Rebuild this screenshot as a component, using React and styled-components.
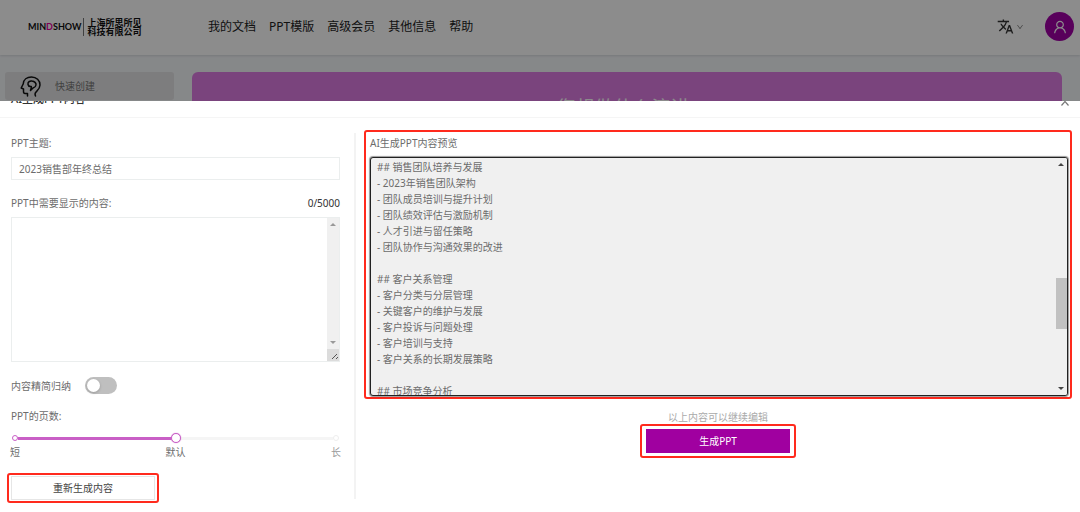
import React, { useState } from "react";
import styled, { createGlobalStyle, css } from "styled-components";
import { MdTranslate } from "react-icons/md";
import { AiOutlineUser, AiOutlineDown } from "react-icons/ai";

const GlobalStyle = createGlobalStyle`
  *, *::before, *::after { box-sizing: border-box; }
  body {
    margin: 0;
    background: #fff;
    color: #6c6c6c;
    font: 10px/16px "Noto Sans", "Noto Sans CJK SC", sans-serif;
  }
  button, input, textarea { font: inherit; color: inherit; margin: 0; }
`;

const Shell = styled.div`
  display: flex;
  flex-direction: column;
  min-height: 100vh;
`;

const Backdrop = styled.div`
  position: relative;
  height: 101px;
  overflow: hidden;
  background: #f5f7fa;
`;

const Mask = styled.div`
  position: absolute;
  inset: 0;
  background: rgba(0, 0, 0, 0.45);
`;

const TopBar = styled.header`
  display: flex;
  align-items: center;
  height: 55px;
  padding: 0 6px 2px 28px;
  background: #fff;
  box-shadow: 0 1px 2px rgba(0, 21, 41, 0.12);
`;

const Brand = styled.a`
  display: flex;
  align-items: center;
  width: 180px;
  color: #111;
  text-decoration: none;
  font: 700 9px/14px Lato, sans-serif;
  em { font-style: normal; color: #e6009e; }
`;

const Company = styled.span`
  margin-left: 2px;
  padding-left: 3px;
  border-left: 1px solid #777;
  font: 700 9px/9px "Noto Sans CJK SC", sans-serif;
`;

const Nav = styled.nav`
  display: flex;
  flex: 1;
  gap: 13px;
  a { color: #222; text-decoration: none; font-size: 12px; }
`;

const IconButton = styled.button`
  display: flex;
  align-items: center;
  gap: 2px;
  padding: 0;
  border: 0;
  background: none;
  color: #333;
`;

const Avatar = styled(IconButton)`
  justify-content: center;
  width: 29px;
  height: 29px;
  margin-left: 21px;
  border-radius: 50%;
  background: #a100a6;
  color: #fff;
`;

const Workspace = styled.div`
  display: flex;
  gap: 18px;
  padding: 17px 18px 0 5px;
`;

const SideItem = styled.a`
  display: flex;
  align-items: center;
  gap: 14px;
  width: 169px;
  height: 28px;
  padding-left: 15px;
  border-radius: 3px;
  background: #e3e4e6;
  color: #777;
  text-decoration: none;
`;

const Banner = styled.div`
  flex: 1;
  height: 80px;
  padding-top: 24px;
  border-radius: 6px;
  background: #de7de3;
  color: #fff;
  font-size: 19px;
  line-height: 24px;
  text-align: center;
`;

const Dialog = styled.section`
  flex: 1;
  background: #fff;
`;

const DialogHeader = styled.header`
  display: flex;
  align-items: flex-end;
  justify-content: space-between;
  height: 17px;
  padding: 0 11px 11px;
  overflow: hidden;
  border-bottom: 1px solid #f5f5f5;
`;

const DialogTitle = styled.h1`
  margin: 0;
  color: #333;
  font-size: 11px;
  line-height: 14px;
  font-weight: 500;
`;

const Columns = styled.div`
  display: grid;
  grid-template-columns: 354px 2px minmax(0, 1fr);
`;

const Divider = styled.div`
  margin: 15px 0 4px;
  background: #f3f3f3;
`;

const Form = styled.form`
  display: flex;
  flex-direction: column;
  align-items: stretch;
  padding: 17px 14px 0 11px;
`;

const Label = styled.label`
  display: block;
`;

const LabelRow = styled.div`
  display: flex;
  justify-content: space-between;
  margin: 15px 0 6px;
  output { color: #333; }
`;

const TextInput = styled.input`
  width: 100%;
  height: 23px;
  margin-top: 6px;
  padding: 0 7px;
  border: 1px solid #ebeeee;
  outline: 0;
`;

const AreaBox = styled.div`
  display: flex;
  overflow: hidden;
  ${(p) => p.$preview
    ? css`
        height: 239px;
        margin-top: 6px;
        border: 1px solid #222;
        border-radius: 3px;
        background: #f0f0f0;
        box-shadow: 0 0 1px 1px rgba(0, 0, 0, 0.4);
      `
    : css`
        height: 145px;
        border: 1px solid #ebeeee;
      `}
  textarea {
    flex: 1;
    min-width: 0;
    padding: ${(p) => (p.$preview ? "1px 6px" : "4px 8px")};
    border: 0;
    outline: 0;
    resize: none;
    overflow: hidden;
    background: transparent;
    line-height: 16px;
  }
`;

const Scrollbar = styled.div`
  display: flex;
  flex-direction: column;
  align-items: center;
  width: 12px;
  padding-top: 5px;
  background: #f0f0f0;
  color: ${(p) => (p.$dark ? "#444" : "#999")};
`;

const Arrow = styled.i`
  border: 3px solid transparent;
  border-top-width: ${(p) => (p.$down ? "3px" : "0")};
  border-bottom-width: ${(p) => (p.$down ? "0" : "3px")};
  ${(p) => (p.$down ? "border-top-color" : "border-bottom-color")}: currentColor;
  margin-bottom: ${(p) => (p.$down ? "5px" : "0")};
`;

const Track = styled.div`
  flex: 1;
  align-self: stretch;
  padding: 112px 0 0 1px;
`;

const Thumb = styled.div`
  height: 51px;
  background: #c1c1c1;
`;

const Grip = styled.svg`
  width: 12px;
  height: 12px;
  background: #dcdcdc;
`;

const SwitchRow = styled.div`
  display: flex;
  align-items: center;
  gap: 14px;
  margin: 15px 0 14px;
`;

const Switch = styled.input`
  appearance: none;
  width: 32px;
  height: 17px;
  border-radius: 9px;
  background: #bfbfbf;
  &::before {
    content: "";
    display: block;
    width: 13px;
    height: 13px;
    margin: 2px;
    border-radius: 50%;
    background: #fff;
    box-shadow: 0 1px 3px rgba(0, 0, 0, 0.2);
  }
  &:checked { background: #a100a6; }
  &:checked::before { margin-left: 17px; }
`;

const Slider = styled.div`
  position: relative;
  display: flex;
  align-items: center;
  height: 12px;
  margin-top: 8px;
`;

const Range = styled.input`
  position: relative;
  z-index: 1;
  appearance: none;
  width: 100%;
  height: 12px;
  background: transparent;
  &::-webkit-slider-runnable-track {
    height: 3px;
    margin: 0;
    background: linear-gradient(90deg, #c95fc6 50%, #f5f5f5 50%);
    background-size: calc(100% - 14px) 3px;
    background-position: center;
    background-repeat: no-repeat;
  }
  &::-webkit-slider-thumb {
    appearance: none;
    width: 10px;
    height: 10px;
    margin-top: -4px;
    border: 1px solid #c95fc6;
    border-radius: 50%;
    background: #fff;
    box-shadow: 0 0 1px #c95fc6;
  }
`;

const Dot = styled.i`
  position: absolute;
  top: 3px;
  ${(p) => (p.$end ? "right" : "left")}: 1px;
  width: 6px;
  height: 6px;
  border: 1px solid ${(p) => (p.$end ? "#eee" : "#c95fc6")};
  border-radius: 50%;
  background: #fff;
`;

const Marks = styled.div`
  display: flex;
  justify-content: space-between;
  margin: 0 -1px 13px;
  span:last-child { color: #999; }
`;

const Highlight = styled.div`
  align-self: ${(p) => p.$align || "stretch"};
  padding: ${(p) => p.$pad};
  margin-left: ${(p) => p.$outdent || "0"};
  border: 2px solid #ff2a1d;
  border-radius: 3px;
`;

const Button = styled.button`
  display: block;
  width: 144px;
  height: 24px;
  padding: 0;
  border: 1px solid ${(p) => (p.$primary ? "#a000a0" : "#e6e6e6")};
  background: ${(p) => (p.$primary ? "#a000a0" : "#fff")};
  color: ${(p) => (p.$primary ? "#fff" : "#444")};
`;

const Preview = styled.div`
  display: flex;
  flex-direction: column;
  padding: 12px 8px 0;
`;

const Hint = styled.p`
  margin: 11px 0 0;
  color: #aaa;
  line-height: 14px;
  text-align: center;
`;

const outline = `## 销售团队培养与发展
- 2023年销售团队架构
- 团队成员培训与提升计划
- 团队绩效评估与激励机制
- 人才引进与留任策略
- 团队协作与沟通效果的改进

## 客户关系管理
- 客户分类与分层管理
- 关键客户的维护与发展
- 客户投诉与问题处理
- 客户培训与支持
- 客户关系的长期发展策略

## 市场竞争分析`;

const navItems = ["我的文档", "PPT模版", "高级会员", "其他信息", "帮助"];

function HeadIcon() {
  return (
    <svg width="21" height="21" viewBox="0 0 21 21" fill="none" stroke="#111" strokeWidth="1.5" strokeLinejoin="round" strokeLinecap="round" aria-hidden="true">
      <path d="M7.500 20v-2.500H5Q3.500 17.500 3.500 15.500V13L1.200 12l2-4C3.500 3.500 7 1 11.500 1 16.500 1 20 4.500 20 9c0 3.500-2 5-4 7-1 1-1.200 2.500-.5 4" />
      <path d="M8 8.500C7.500 6 10 4.500 12 5c2.500.3 4.300 2 4 4-.2 1.800-1.800 2.600-3 3l-2.500 2.500C11 12.500 11.500 11.500 11.300 10.500 9.500 10.800 8.300 10 8 8.500z" />
    </svg>
  );
}

function CloseIcon() {
  return (
    <svg width="8" height="9" viewBox="0 0 8 9" fill="none" stroke="#777" strokeWidth="1.2" aria-hidden="true">
      <path d="M0.500 0.500l7 8M7.500 0.500l-7 8" />
    </svg>
  );
}

export default function App() {
  const [topic, setTopic] = useState("2023销售部年终总结");
  const [content, setContent] = useState("");
  const [preview, setPreview] = useState(outline);

  return (
    <Shell>
      <GlobalStyle />
      <Backdrop>
        <TopBar>
          <Brand href="#">
            <span>MIN<em>D</em>SHOW</span>
            <Company>上海所思所见<br />科技有限公司</Company>
          </Brand>
          <Nav>
            {navItems.map((item) => <a href="#" key={item}>{item}</a>)}
          </Nav>
          <IconButton type="button" aria-label="语言">
            <MdTranslate size={17} />
            <AiOutlineDown size={8} color="#777" />
          </IconButton>
          <Avatar type="button" aria-label="账户"><AiOutlineUser size={16} /></Avatar>
        </TopBar>
        <Workspace>
          <SideItem href="#"><HeadIcon />快速创建</SideItem>
          <Banner>您想做什么演讲?</Banner>
        </Workspace>
        <Mask />
      </Backdrop>
      <Dialog role="dialog" aria-labelledby="dialog-title">
        <DialogHeader>
          <DialogTitle id="dialog-title">AI生成PPT内容</DialogTitle>
          <IconButton type="button" aria-label="关闭"><CloseIcon /></IconButton>
        </DialogHeader>
        <Columns>
          <Form onSubmit={(e) => e.preventDefault()}>
            <Label htmlFor="topic">PPT主题:</Label>
            <TextInput id="topic" value={topic} onChange={(e) => setTopic(e.target.value)} />
            <LabelRow>
              <Label htmlFor="content">PPT中需要显示的内容:</Label>
              <output htmlFor="content">{content.length}/5000</output>
            </LabelRow>
            <AreaBox>
              <textarea id="content" maxLength={5000} value={content} onChange={(e) => setContent(e.target.value)} />
              <Scrollbar aria-hidden="true">
                <Arrow />
                <Track />
                <Arrow $down />
                <Grip viewBox="0 0 12 12" stroke="#555"><path d="M5 10l5-5M9 10l2-2" /></Grip>
              </Scrollbar>
            </AreaBox>
            <SwitchRow>
              <Label htmlFor="concise">内容精简归纳</Label>
              <Switch id="concise" type="checkbox" role="switch" />
            </SwitchRow>
            <Label htmlFor="pages">PPT的页数:</Label>
            <Slider>
              <Range id="pages" type="range" min="0" max="2" defaultValue="1" />
              <Dot />
              <Dot $end />
            </Slider>
            <Marks><span>短</span><span>默认</span><span>长</span></Marks>
            <Highlight $align="flex-start" $pad="1px 2px" $outdent="-4px">
              <Button type="submit">重新生成内容</Button>
            </Highlight>
          </Form>
          <Divider />
          <Preview>
            <Highlight $pad="3px 2px 1px 4px">
              <Label htmlFor="preview">AI生成PPT内容预览</Label>
              <AreaBox $preview>
                <textarea id="preview" value={preview} onChange={(e) => setPreview(e.target.value)} />
                <Scrollbar $dark aria-hidden="true">
                  <Arrow />
                  <Track><Thumb /></Track>
                  <Arrow $down />
                </Scrollbar>
              </AreaBox>
            </Highlight>
            <Hint>以上内容可以继续编辑</Hint>
            <Highlight $align="center" $pad="3px 4px">
              <Button type="button" $primary>生成PPT</Button>
            </Highlight>
          </Preview>
        </Columns>
      </Dialog>
    </Shell>
  );
}
